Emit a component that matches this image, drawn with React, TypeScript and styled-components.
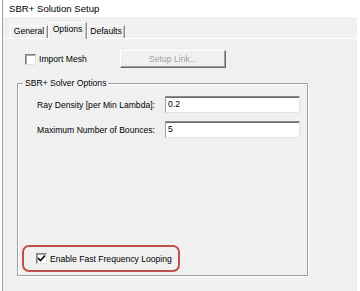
import React from 'react';
import styled, { createGlobalStyle } from 'styled-components';

const GlobalStyle = createGlobalStyle`
    html, body {
        margin: 0;
        padding: 0;
        background: #ffffff;
    }
    body {
        font-family: 'Liberation Sans', Arial, sans-serif;
        color: #000000;
    }
`;

const Screen = styled.div`
    width: 360px;
    height: 291px;
    background: #ffffff;
    padding-left: 2px;
    box-sizing: border-box;
    overflow: hidden;
`;

const Frame = styled.div`
    width: 355px;
    height: 291px;
    border-left: 1px solid #a0a0a0;
    box-sizing: border-box;
    display: flex;
    flex-direction: column;
`;

const TitleBar = styled.div`
    height: 17px;
    background: #ffffff;
    padding-left: 6px;
    font-size: 9.6px;
    line-height: 17px;
    color: #000000;
`;

const Body = styled.div`
    flex: 1;
    background: #f0f0f0;
    display: flex;
    flex-direction: column;
`;

const TabStrip = styled.div`
    height: 21px;
    display: flex;
    align-items: flex-end;
    padding-left: 7px;
`;

const Tab = styled.div<{ $active?: boolean; $w: number }>`
    width: ${(p) => p.$w}px;
    height: ${(p) => (p.$active ? 17 : 13)}px;
    margin-bottom: ${(p) => (p.$active ? -1 : 0)}px;
    box-sizing: border-box;
    border-top: 1px solid #ffffff;
    border-left: 1px solid #ffffff;
    border-right: 1px solid #8a8a8a;
    box-shadow: inset -1px 0 0 #c8c8c8;
    background: #f0f0f0;
    font-size: 8.6px;
    line-height: ${(p) => (p.$active ? 13 : 11)}px;
    text-align: center;
    position: relative;
    z-index: ${(p) => (p.$active ? 2 : 1)};
`;

const Panel = styled.div`
    flex: 1;
    border-top: 1px solid #ffffff;
    display: flex;
    flex-direction: column;
`;

const ImportRow = styled.div`
    margin-top: 11px;
    height: 18px;
    display: flex;
    align-items: center;
    padding-left: 22px;
`;

const CheckLabel = styled.label<{ $w?: number }>`
    display: flex;
    align-items: center;
    gap: 3px;
    font-size: 8.6px;
    ${(p) => (p.$w ? `width: ${p.$w}px;` : '')}
`;

const Box = styled.span`
    width: 11px;
    height: 11px;
    box-sizing: border-box;
    background: #ffffff;
    border-top: 1px solid #808080;
    border-left: 1px solid #808080;
    border-right: 1px solid #e3e3e3;
    border-bottom: 1px solid #e3e3e3;
    box-shadow: inset 1px 1px 0 #a8a8a8;
    display: flex;
    align-items: center;
    justify-content: center;
`;

const SetupButton = styled.button`
    width: 106px;
    height: 18px;
    box-sizing: border-box;
    background: #f0f0f0;
    border-top: 1px solid #ffffff;
    border-left: 1px solid #ffffff;
    border-right: 1px solid #696969;
    border-bottom: 1px solid #696969;
    box-shadow: inset -1px -1px 0 #a0a0a0;
    color: #a0a0a0;
    font-family: 'Liberation Sans', Arial, sans-serif;
    font-size: 8.6px;
    padding: 0;
`;

const Group = styled.fieldset`
    margin: 10px 0 0 14px;
    padding: 0;
    width: 291px;
    box-sizing: border-box;
    border: 1px solid #a0a0a0;
    box-shadow: 1px 1px 0 #ffffff, inset 1px 1px 0 #ffffff;
    min-width: 0;
`;

const Legend = styled.legend`
    margin-left: 5px;
    padding: 0 2px;
    font-size: 8.6px;
    line-height: 11px;
`;

const GroupInner = styled.div`
    height: 186px;
    display: flex;
    flex-direction: column;
`;

const FieldRow = styled.div<{ $top: number }>`
    margin-top: ${(p) => p.$top}px;
    display: flex;
    align-items: center;
    padding-left: 19px;
`;

const FieldLabel = styled.span`
    width: 128px;
    font-size: 8.6px;
`;

const Input = styled.div`
    width: 135px;
    height: 17px;
    box-sizing: border-box;
    background: #ffffff;
    border-top: 1px solid #8a8a8a;
    border-left: 1px solid #a0a0a0;
    border-right: 1px solid #e3e3e3;
    border-bottom: 1px solid #e3e3e3;
    box-shadow: inset 0 1px 0 #696969;
    font-size: 8.6px;
    line-height: 15px;
    padding-left: 2px;
`;

const Highlight = styled.div`
    margin: auto 0 3px 4px;
    width: 158px;
    height: 27px;
    box-sizing: border-box;
    border: 2px solid #c0504d;
    border-radius: 7px;
    display: flex;
    align-items: center;
    padding-left: 12px;
`;

const Check = () => (
    <svg width="9" height="9" viewBox="0 0 9 9">
        <polyline points="1,4 3.5,6.5 8,1.5" fill="none" stroke="#000" strokeWidth="1.6" />
    </svg>
);

export default function App() {
    return (
        <Screen>
            <GlobalStyle />
            <Frame>
                <TitleBar>SBR+ Solution Setup</TitleBar>
                <Body>
                    <TabStrip>
                        <Tab $w={38}>General</Tab>
                        <Tab $w={39} $active>
                            Options
                        </Tab>
                        <Tab $w={38}>Defaults</Tab>
                    </TabStrip>
                    <Panel>
                        <ImportRow>
                            <CheckLabel $w={95}>
                                <Box />
                                Import Mesh
                            </CheckLabel>
                            <SetupButton disabled>Setup Link...</SetupButton>
                        </ImportRow>
                        <Group>
                            <Legend>SBR+ Solver Options</Legend>
                            <GroupInner>
                                <FieldRow $top={7}>
                                    <FieldLabel>Ray Density [per Min Lambda]:</FieldLabel>
                                    <Input>0.2</Input>
                                </FieldRow>
                                <FieldRow $top={8}>
                                    <FieldLabel>Maximum Number of Bounces:</FieldLabel>
                                    <Input>5</Input>
                                </FieldRow>
                                <Highlight>
                                    <CheckLabel>
                                        <Box>
                                            <Check />
                                        </Box>
                                        Enable Fast Frequency Looping
                                    </CheckLabel>
                                </Highlight>
                            </GroupInner>
                        </Group>
                    </Panel>
                </Body>
            </Frame>
        </Screen>
    );
}
